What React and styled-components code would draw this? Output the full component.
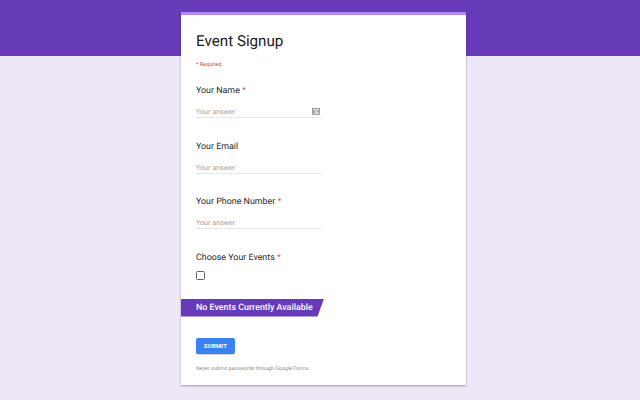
import React from "react";
import styled, { createGlobalStyle } from "styled-components";

const GlobalStyle = createGlobalStyle`
	html, body {
		margin: 0;
		height: 100%;
		background: #ede7f6;
		font-family: Roboto, "Liberation Sans", sans-serif;
		text-rendering: geometricPrecision;
	}
`;

const Page = styled.div`
	position: relative;
	width: 640px;
	height: 400px;
	overflow: hidden;
	display: flex;
	justify-content: center;
	align-items: flex-start;
	padding: 12px 0 0 7px;
	box-sizing: border-box;
`;

const Header = styled.div`
	position: absolute;
	top: 0;
	left: 0;
	right: 0;
	height: 56px;
	background: #673ab7;
`;

const Card = styled.main`
	position: relative;
	width: 285px;
	height: 373px;
	box-sizing: border-box;
	background: #fff;
	border-top: 3px solid #b388f0;
	box-shadow: 0 1px 2px rgba(60, 40, 90, 0.4);
	padding: 16px 0 0;
`;

const Title = styled.h1`
	margin: 0 0 0 15px;
	font-size: 15.2px;
	line-height: 20px;
	font-weight: 400;
	color: #212121;
`;

const Required = styled.div`
	margin: 10px 0 0 15px;
	font-size: 5.5px;
	line-height: 8px;
	color: #c5504a;
`;

const Question = styled.section`
	margin: 0 0 0 15px;
	height: 55.5px;
	&:first-of-type {
		margin-top: 15px;
	}
`;

const Label = styled.div`
	font-size: 8.9px;
	line-height: 15px;
	color: #2b2b2b;
`;

const Star = styled.span`
	color: #d9534f;
`;

const AnswerRow = styled.div`
	position: relative;
	width: 126px;
	margin-top: 6px;
	height: 12px;
	border-bottom: 1px solid #e8e8e8;
	font-size: 7.1px;
	line-height: 14px;
	color: #a3a3a3;
`;

const AutofillIcon = styled.svg`
	position: absolute;
	right: 2px;
	top: 3px;
	width: 8px;
	height: 7px;
`;

const Checkbox = styled.div`
	width: 7px;
	height: 7px;
	margin-top: 5px;
	border: 1.2px solid #5f5f5f;
	border-radius: 1.5px;
`;

const Banner = styled.div`
	width: 143px;
	height: 18px;
	margin-top: -7.5px;
	box-sizing: border-box;
	padding-left: 15px;
	background: #673ab7;
	clip-path: polygon(0 0, 100% 0, 95.5% 100%, 0 100%);
	color: #fff;
	font-size: 8.9px;
	font-weight: 500;
	line-height: 18px;
	white-space: nowrap;
`;

const SubmitButton = styled.button`
	display: block;
	margin: 21px 0 0 15px;
	width: 39px;
	height: 16px;
	padding: 0;
	border: none;
	border-radius: 2px;
	background: #3b82f0;
	box-shadow: 0 1px 1px rgba(0, 0, 0, 0.2);
	color: #fff;
	font-family: inherit;
	font-size: 6px;
	font-weight: 700;
	letter-spacing: 0.2px;
`;

const Footnote = styled.div`
	margin: 11px 0 0 15px;
	font-size: 5.3px;
	line-height: 8px;
	color: #8d8d8d;
`;

const questions = [
	{ label: "Your Name", required: true, autofill: true },
	{ label: "Your Email" },
	{ label: "Your Phone Number", required: true },
];

const App = () => (
	<Page>
		<GlobalStyle />
		<Header />
		<Card>
			<Title>Event Signup</Title>
			<Required>* Required</Required>
			{questions.map((q) => (
				<Question key={q.label}>
					<Label>
						{q.label} {q.required && <Star>*</Star>}
					</Label>
					<AnswerRow>
						Your answer
						{q.autofill && (
							<AutofillIcon viewBox="0 0 8 7" fill="none" stroke="#777" strokeWidth="0.7">
								<rect x="0.4" y="0.4" width="7.2" height="6.2" />
								<path d="M0.4 2.2H7.6M4.6 3.4H7M4.6 5H7" />
								<rect x="1.2" y="3" width="2.2" height="2.6" fill="#999" stroke="none" />
							</AutofillIcon>
						)}
					</AnswerRow>
				</Question>
			))}
			<Question>
				<Label>
					Choose Your Events <Star>*</Star>
				</Label>
				<Checkbox />
			</Question>
			<Banner>No Events Currently Available</Banner>
			<SubmitButton>SUBMIT</SubmitButton>
			<Footnote>Never submit passwords through Google Forms.</Footnote>
		</Card>
	</Page>
);

export default App;
